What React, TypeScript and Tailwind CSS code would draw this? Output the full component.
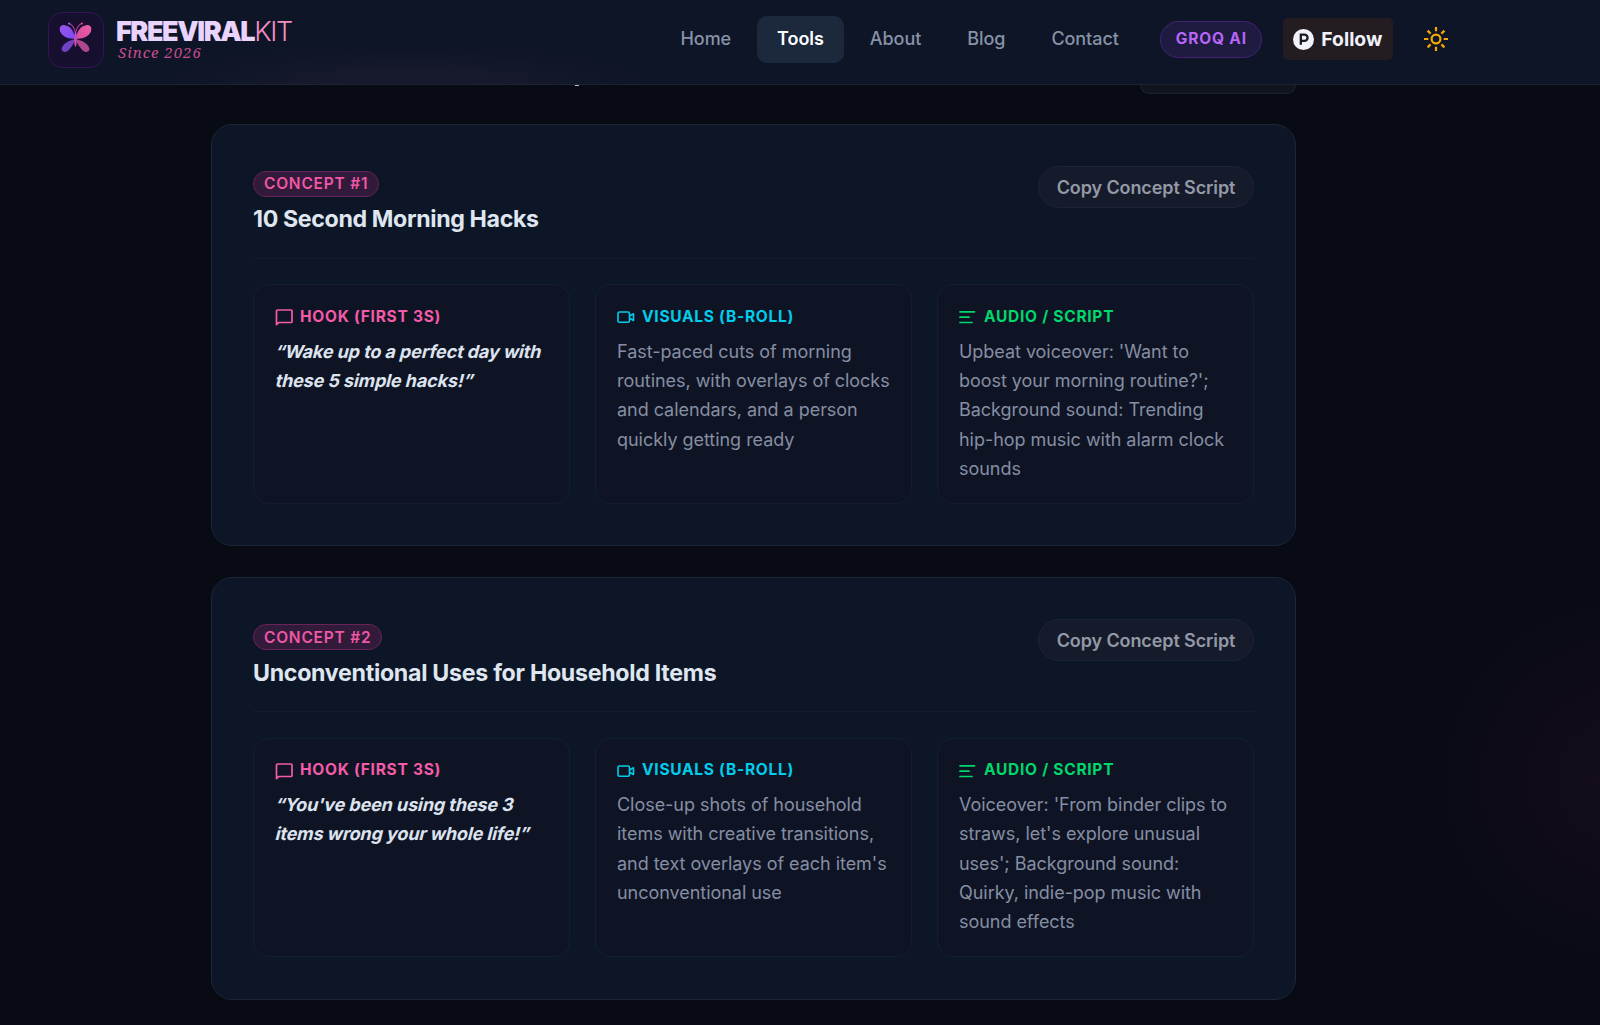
import type { ReactNode } from 'react';

interface Concept {
  id: number;
  title: string;
  titleTracking: string;
  hookLines: string[];
  visuals: string;
  audio: string;
}

const concepts: Concept[] = [
  {
    id: 1,
    title: '10 Second Morning Hacks',
    titleTracking: 'tracking-[-0.37px]',
    hookLines: ['“Wake up to a perfect day with', 'these 5 simple hacks!”'],
    visuals: 'Fast-paced cuts of morning routines, with overlays of clocks and calendars, and a person quickly getting ready',
    audio: "Upbeat voiceover: 'Want to boost your morning routine?'; Background sound: Trending hip-hop music with alarm clock sounds"
  },
  {
    id: 2,
    title: 'Unconventional Uses for Household Items',
    titleTracking: 'tracking-[-0.29px]',
    hookLines: ["“You've been using these 3", 'items wrong your whole life!”'],
    visuals: "Close-up shots of household items with creative transitions, and text overlays of each item's unconventional use",
    audio: "Voiceover: 'From binder clips to straws, let's explore unusual uses'; Background sound: Quirky, indie-pop music with sound effects"
  }
];

const navItems = ['Home', 'Tools', 'About', 'Blog', 'Contact'];

const ButterflyIcon = () => (
  <svg viewBox="0 0 32 30" className="-mt-[5px] -ml-[2px] h-[31px] w-[33px]">
    <defs>
      <linearGradient id="wing-left" x1="0" y1="0" x2="1" y2="1">
        <stop offset="0" stopColor="#9a55ee" />
        <stop offset="1" stopColor="#7c4af0" />
      </linearGradient>
      <linearGradient id="wing-right" x1="1" y1="0" x2="0" y2="1">
        <stop offset="0" stopColor="#ea5fa8" />
        <stop offset="1" stopColor="#d94a9c" />
      </linearGradient>
      <linearGradient id="body" x1="0" y1="0" x2="0" y2="1">
        <stop offset="0" stopColor="#a855f7" />
        <stop offset="1" stopColor="#ec4899" />
      </linearGradient>
    </defs>
    <path d="M15.300 16C15 9 11 3.500 5.500 3C1.500 2.800 0 5 1 9C2.500 14 10 17 15.300 16Z" fill="url(#wing-left)" />
    <path d="M16.700 16C17 9 21 3.500 26.500 3C30.500 2.800 32 5 31 9C29.500 14 22 17 16.700 16Z" fill="url(#wing-right)" />
    <path d="M15.300 17C10 17.500 3.500 21 2.500 26C2.200 29.500 6.500 30 9.500 27C12.500 24 15 20 15.300 17Z" fill="#7142c4" />
    <path d="M16.700 17C22 17.500 28.500 21 29.500 26C29.800 29.500 25.500 30 22.500 27C19.500 24 17 20 16.700 17Z" fill="#ae478f" />
    <path d="M15.500 9C14.500 5 12.500 2.500 10 1.500M16.500 9C17.500 5 19.500 2.500 22 1.500" fill="none" stroke="#b43f9a" strokeWidth="1" strokeLinecap="round" />
    <circle cx="9.800" cy="1.500" r="1.100" fill="#a855f7" />
    <circle cx="22.200" cy="1.500" r="1.100" fill="#ec4899" />
    <ellipse cx="16" cy="16.500" rx="1.300" ry="7.500" fill="url(#body)" />
  </svg>
);

const SunIcon = () => (
  <svg viewBox="0 0 24 24" className="size-6" fill="none" stroke="currentColor" strokeWidth="2.200">
    <circle cx="12" cy="12" r="4.400" />
    <path d="M12 0V4.300M12 19.700V24M0 12H4.300M19.700 12H24M3.600 3.600L6.600 6.600M17.400 17.400L20.400 20.400M3.600 20.400L6.600 17.400M17.400 6.600L20.400 3.600" />
  </svg>
);

const HookIcon = () => (
  <svg viewBox="0 0 18 18" className="size-[18px]" fill="none" stroke="currentColor" strokeWidth="1.700" strokeLinejoin="round">
    <path d="M1.500 16.700V3A1 1 0 0 1 2.500 2H16A1 1 0 0 1 17 3V13.500A1 1 0 0 1 16 14.500H3.700Z" />
  </svg>
);

const VideoIcon = () => (
  <svg viewBox="0 0 18 18" className="size-[18px]" fill="none" stroke="currentColor" strokeWidth="1.600" strokeLinejoin="round">
    <rect x="1" y="4" width="11.500" height="10.300" rx="1.500" />
    <path d="M12.500 8L16.500 5.800V12.500L12.500 10.300" />
  </svg>
);

const LinesIcon = () => (
  <svg viewBox="0 0 18 18" className="size-[18px]" fill="none" stroke="currentColor" strokeWidth="1.700" strokeLinecap="round">
    <path d="M1 3.800H15.500M1 9.200H10M1 14.500H13" />
  </svg>
);

const Header = () => (
  <header className="relative z-10 flex h-[85px] shrink-0 items-start border-b border-[#1b2431] bg-[#0e1526] bg-[radial-gradient(ellipse_250px_44px_at_410px_88px,#171a2c_30%,transparent)]">
    <div className="flex w-[681px] items-start gap-3 pt-3 pl-12">
      <div className="flex size-[56px] items-center justify-center rounded-[15px] border border-[#35145a] bg-[#170f2e]">
        <ButterflyIcon />
      </div>
      <div className="pt-[6px]">
        <p className="flex h-[27px] items-center text-[27px] leading-none tracking-[-1.42px] text-[#e8d4fc]">
          <span className="font-black">FREEVIRAL</span>
          <span className="font-light text-[#f38dc0]">KIT</span>
        </p>
        <p className="ml-[2px] font-['Noto_Serif','DejaVu_Serif','Liberation_Serif',serif] text-[15px] leading-[15px] tracking-[1px] text-[#c84d90] italic">Since 2026</p>
      </div>
    </div>
    <nav className="-ml-[20.500px] flex gap-[6px] pt-4">
      {navItems.map((item) => (
        <a
          key={item}
          className={`flex h-[47px] items-center rounded-[10px] px-5 pb-[3px] text-[18px] tracking-[-0.06px] ${
            item === 'Tools' ? 'bg-[#1c293d] font-semibold text-white' : 'font-medium text-[#8792a6]'
          }`}
        >
          {item}
        </a>
      ))}
    </nav>
    <span className="mt-[21px] ml-[21.500px] flex h-[37px] w-[102px] items-center justify-center rounded-full border border-[#432275] bg-[#1f1a40] pb-[2px] text-[15.5px] font-bold tracking-[0.8px] text-[#b667f5]">
      GROQ AI
    </span>
    <button className="mt-[18px] ml-[21px] flex h-[42px] w-[110px] items-center gap-[7px] rounded-[5px] bg-[#231d22] pl-[10px]">
      <svg viewBox="0 0 22 22" className="size-[21px]">
        <circle cx="11" cy="11" r="11" fill="#f1f1fa" />
        <path d="M8.200 16.500V6H12A3.200 3.200 0 0 1 12 12.500H8.500" fill="none" stroke="#1b1a24" strokeWidth="2.400" />
      </svg>
      <span className="pt-px text-[19.300px] font-bold text-[#f1f1fa]">Follow</span>
    </button>
    <div className="mt-[27px] ml-[31px] text-[#f5a800]">
      <SunIcon />
    </div>
  </header>
);

const Panel = ({ icon, label, tone, children }: { icon: ReactNode; label: string; tone: string; children: ReactNode }) => (
  <div className="h-[219.500px] rounded-[16px] border border-[#131e2e] bg-[#0f1425] px-[21px] pt-[21px]">
    <div className={`flex h-[20px] items-center gap-[7px] text-[15.5px] font-bold tracking-[0.73px] ${tone}`}>
      <span className="mt-[2px]">{icon}</span>
      {label}
    </div>
    <div className="mt-[10.500px] -mr-2 text-[18px] leading-[29.300px] tracking-[-0.04px] text-[#858ea2]">{children}</div>
  </div>
);

const ConceptCard = ({ concept }: { concept: Concept }) => (
  <article className="h-[422.300px] rounded-[21px] border border-[#1b2636] bg-[#0d1626] px-[41px] pt-[41px]">
    <div className="flex h-[93px] items-start justify-between border-b border-[#131c2b]">
      <div className="pt-[5px]">
        <span className="flex h-[26px] w-fit items-center rounded-full border border-[#67235a] bg-[#321a3a] px-[10px] text-[15.5px] font-semibold tracking-[0.77px] text-[#ee58a5]">
          {`CONCEPT #${concept.id}`}
        </span>
        <h3 className={`mt-[6.300px] text-[23.200px] leading-[32px] font-bold text-[#dfe6f0] ${concept.titleTracking}`}>{concept.title}</h3>
      </div>
      <button className="h-[42px] w-[216px] rounded-full border border-[#1c2333] bg-[#161b2c] text-[18px] font-semibold tracking-[-0.1px] text-[#9499a6]">
        Copy Concept Script
      </button>
    </div>
    <div className="mt-[25.400px] grid grid-cols-3 gap-[25px]">
      <Panel icon={<HookIcon />} label="HOOK (FIRST 3S)" tone="text-[#f45ba8]">
        <p className="pl-px font-bold tracking-[-0.12px] text-[#dce3ee]">
          {concept.hookLines.map((line) => (
            <span key={line} className="block w-fit -skew-x-[14deg] whitespace-nowrap">
              {line}
            </span>
          ))}
        </p>
      </Panel>
      <Panel icon={<VideoIcon />} label="VISUALS (B-ROLL)" tone="text-[#00cdeb]">
        <p>{concept.visuals}</p>
      </Panel>
      <Panel icon={<LinesIcon />} label="AUDIO / SCRIPT" tone="text-[#00d76c]">
        <p>{concept.audio}</p>
      </Panel>
    </div>
  </article>
);

export default function App() {
  return (
    <div className="flex h-[1025px] w-[1600px] flex-col overflow-hidden bg-[#080a14] bg-[radial-gradient(circle_190px_at_1620px_780px,#150d1a,transparent)] font-['Inter',sans-serif]">
      <Header />
      <main className="ml-[211px] flex w-[1085px] flex-col">
        <div className="flex h-[9px] justify-between">
          <span className="ml-[364px] h-px w-[4px] bg-[#b9bfc9]" />
          <span className="w-[156px] rounded-b-[9px] border border-t-0 border-[#1f232d] bg-[#12141d]" />
        </div>
        <div className="mt-[30px] flex flex-col gap-[31px]">
          {concepts.map((concept) => (
            <ConceptCard key={concept.id} concept={concept} />
          ))}
        </div>
      </main>
    </div>
  );
}
